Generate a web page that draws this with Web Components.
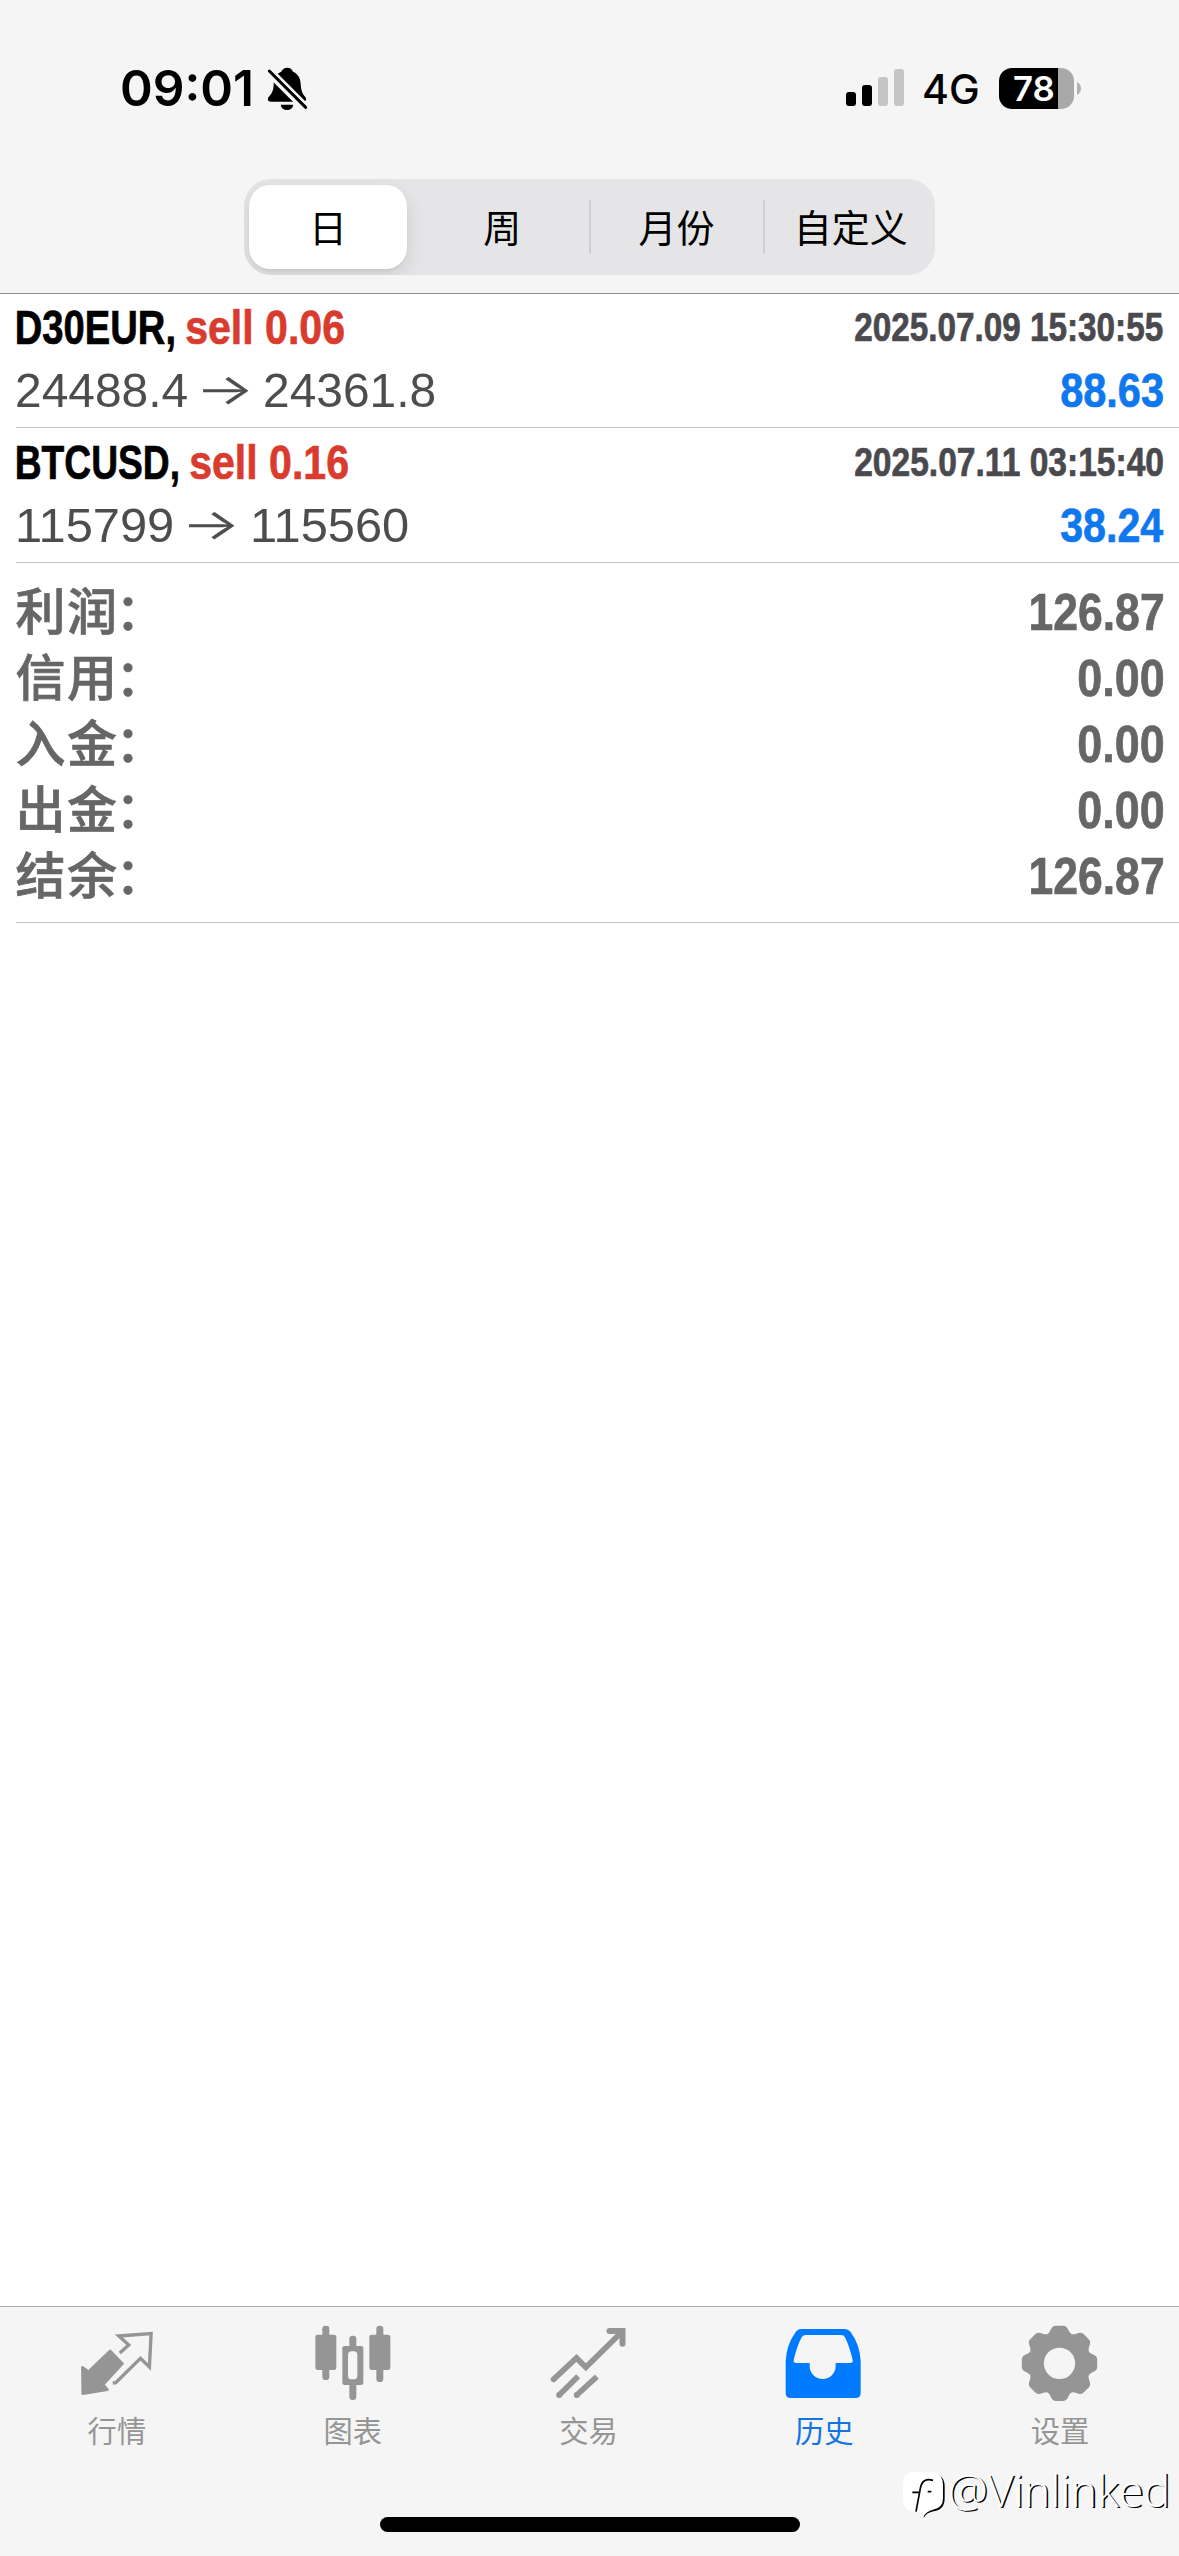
<!DOCTYPE html>
<html lang="zh-CN">
<head>
<meta charset="utf-8">
<title>历史</title>
<style>
html,body{margin:0;padding:0;background:#fff}
body{width:1179px;height:2556px;overflow:hidden;font-family:"Liberation Sans","Noto Sans CJK SC",sans-serif}
</style>
</head>
<body>
<history-app></history-app>
<script>
const define = (name, html, setup) => {
  const tpl = document.createElement('template');
  tpl.innerHTML = html;
  customElements.define(name, class extends HTMLElement {
    connectedCallback() {
      if (this.shadowRoot) return;
      this.attachShadow({mode: 'open'}).append(tpl.content.cloneNode(true));
      if (setup) setup(this, this.shadowRoot);
    }
  });
};

/* Text condensed or widened so that its ink spans exactly `w` pixels. */
const pen = document.createElement('canvas').getContext('2d');
define('fit-text', `<style>
  :host{display:inline-block;white-space:nowrap;flex:none}
  span{display:inline-block;transform-origin:0 50%}
</style><span><slot></slot></span>`, (el, root) => {
  const cs = getComputedStyle(el);
  pen.font = `${cs.fontWeight} ${cs.fontSize} ${cs.fontFamily}`;
  const m = pen.measureText(el.textContent);
  const w = +el.getAttribute('w');
  const k = w / (m.actualBoundingBoxRight + m.actualBoundingBoxLeft);
  el.style.width = w + 'px';
  root.querySelector('span').style.transform = `translateX(${m.actualBoundingBoxLeft * k}px) scaleX(${k})`;
});

define('status-bar', `<style>
  :host{display:flex;height:179px;box-sizing:border-box;padding:56px 98px 0 122px;align-items:flex-start;font-family:Inter,sans-serif;color:#000}
  .row{display:flex;height:64px;align-items:center;width:100%}
  .time{font-size:50px;font-weight:600;line-height:64px}
  .bell{margin:1px 0 0 15px}
  .sig{margin-left:auto;margin-right:20px}
  .net{font-size:41px;font-weight:500;line-height:64px;margin:2px 21px 0 0}
  .batt{display:flex;align-items:center;gap:3px}
  .cell{width:75px;height:41px;border-radius:13px;background:linear-gradient(90deg,#000 59px,#a8a8a8 59px);color:#fff;font-size:34px;font-weight:600;line-height:42px;box-sizing:border-box;padding-left:15px}
  svg{display:block;flex:none}
</style>
<div class="row">
  <fit-text class="time" w="129">09:01</fit-text>
  <svg class="bell" width="44" height="46" viewBox="498 46 132 138">
    <path d="M562 51C552 51 546 56 544 63C527 70 521 83 521 99C521 122 514 129 506 139C501 147 504 153 513 153H609C618 153 621 146 616 139C607 129 603 119 602 99C601 82 594 69 579 63C577 56 571 51 562 51Z"/>
    <path d="M542 162H580C578 173 571 178 561 178S544 173 542 162Z"/>
    <path d="M500 55L624 179" stroke="#f5f5f5" stroke-width="27"/>
    <path d="M508 61L617 170" stroke="#000" stroke-width="9" stroke-linecap="round"/>
  </svg>
  <svg class="sig" width="58" height="38" viewBox="0 0 58 38">
    <rect x="0" y="23" width="10" height="14" rx="3"/><rect x="16" y="16" width="10" height="21" rx="3"/>
    <rect x="32" y="8" width="10" height="29" rx="3" fill="#c5c5c5"/><rect x="48" y="0" width="10" height="37" rx="3" fill="#c5c5c5"/>
  </svg>
  <fit-text class="net" w="54">4G</fit-text>
  <div class="batt"><div class="cell"><fit-text w="40">78</fit-text></div>
  <svg width="4" height="13" viewBox="0 0 4 13"><path d="M0 0Q4 2.5 4 6.5T0 13Z" fill="#b0b0b0"/></svg></div>
</div>`);

define('segment-item', `<style>
  :host{display:flex;flex:1;align-items:center;justify-content:center;height:84px;box-sizing:border-box;padding-bottom:3px;border-radius:21px;font:38px/81px "Noto Sans CJK SC",sans-serif;color:#000}
  :host([selected]){background:#fff;box-shadow:0 7px 20px rgba(0,0,0,.1),0 2px 3px rgba(0,0,0,.05)}
</style><slot></slot>`);

define('segmented-control', `<style>
  :host{display:flex;align-items:center;width:691px;height:96px;box-sizing:border-box;padding:0 5px;background:#e5e5e7;border-radius:27px;margin:0 auto;overflow:hidden}
  i{width:2px;height:54px;background:#cfcfd2;margin:0 7px}
  i.off{background:none}
</style>
<segment-item selected>日</segment-item><i class="off"></i><segment-item>周</segment-item><i></i><segment-item>月份</segment-item><i></i><segment-item>自定义</segment-item>`);

define('deal-row', `<style>
  :host{display:block;height:135px;box-sizing:border-box;margin-left:16px;padding:1px 16px 0 1px;border-bottom:1px solid #c3c3c5}
  :host([first]){height:134px}
  :host([first]) .top{margin-top:-1px}
  .row{display:flex;align-items:baseline}
  .top{height:67px;line-height:67px;font-size:49px;font-weight:700;-webkit-text-stroke:.7px currentColor}
  .bot{height:59px;line-height:59px;font-size:49px}
  .side{color:#d93c2e;margin-left:12px}
  .date{margin-left:auto;font-size:40px;color:#4a4a4e;transform:translateY(-3.5px)}
  .price{color:#4d4d50}
  .arrow{font-family:Inter,sans-serif;font-size:42px;font-weight:300;font-feature-settings:"case";color:#4d4d50;margin:0 17px 0 16px;line-height:50px;transform:translateY(-1px);-webkit-text-stroke:.5px #4d4d50}
  :host(:not([first])) .arrow{margin:0 19px 0 17px}
  :host(:not([first])) .bot{padding-left:1px}
  .val{margin-left:auto;font-weight:700;color:#0f78ee;-webkit-text-stroke:.7px #0f78ee}
</style><div class="row top"></div><div class="row bot"></div>`, (el, root) => {
  const [sym, side, date, a, b, val] = el.dataset.v.split('|').map(s => s.split('='));
  const t = (cls, [txt, w]) => `<fit-text class="${cls}" w="${w}">${txt}</fit-text>`;
  root.querySelector('.top').innerHTML = t('sym', sym) + t('side', side) + t('date', date);
  root.querySelector('.bot').innerHTML = t('price', a) + t('arrow', ['→', 45]) + t('price', b) + t('val', val);
});

define('sum-row', `<style>
  :host{display:flex;align-items:baseline;justify-content:space-between;height:66px;color:#666;font-size:52px;font-weight:700;line-height:66px;-webkit-text-stroke:.7px #666}
  .l{font:500 50px/66px "Liberation Sans","Noto Sans CJK SC",sans-serif;letter-spacing:1.5px;margin-left:-.5px}
  i{font-style:normal;margin-left:-3px}
</style><span class="l"><slot></slot><i>：</i></span><fit-text></fit-text>`, (el, root) => {
  const v = el.getAttribute('value');
  const f = document.createElement('fit-text');
  f.textContent = v;
  f.setAttribute('w', v.length > 4 ? 132 : 84);
  root.querySelector('fit-text').replaceWith(f);
});

define('tab-item', `<style>
  :host{display:flex;flex:1;flex-direction:column;align-items:center;color:#959595}
  :host([active]){color:#007aff}
  .t{font:29.3px/44px "Noto Sans CJK SC",sans-serif;margin:4px 2px 0 0}
  :host([active]) .t{color:#1173e4}
</style><slot name="icon"></slot><span class="t"><slot></slot></span>`);

define('tab-bar', `<style>
  :host{display:flex;height:250px;box-sizing:border-box;border-top:1px solid #adadad;background:#f5f5f5;padding-top:13px}
  svg{display:block;width:80px;height:83.33px;fill:currentColor}
</style>
<tab-item><svg slot="icon" viewBox="83.7 90 240 250">
  <path d="M97 232L115 245L180 183L217 221L159 284L172 299L98 311Z" stroke="currentColor" stroke-width="8" stroke-linejoin="round"/>
  <path d="M209 189L236 165L206 138L303 131L298 231L271 205L197 278L188 279" fill="none" stroke="currentColor" stroke-width="10"/>
</svg>行情</tab-item>
<tab-item><svg slot="icon" viewBox="791 90 240 250">
  <rect x="816" y="107" width="21" height="163" rx="10"/><rect x="795" y="134" width="63" height="106" rx="7"/>
  <rect x="978" y="107" width="21" height="169" rx="10"/><rect x="957" y="134" width="63" height="106" rx="7"/>
  <rect x="897" y="137" width="21" height="193" rx="10"/><rect x="876" y="168" width="63" height="117" rx="7"/>
  <rect x="893" y="184" width="28" height="84" rx="11" fill="#f5f5f5"/>
</svg>图表</tab-item>
<tab-item><svg slot="icon" viewBox="88.5 90 240 250"><g fill="none" stroke="currentColor" stroke-width="17">
  <path d="M102 268L171 204L199 232L306 127" stroke-linecap="round"/><path d="M270 123H309V161" stroke-width="18" stroke-linecap="round"/>
  <path d="M119 315L176 259M172 315L232 260"/></g><circle cx="119" cy="315" r="9"/><circle cx="172" cy="315" r="9"/>
</svg>交易</tab-item>
<tab-item active><svg slot="icon" viewBox="796 90 240 250">
  <path fill-rule="evenodd" d="M845 117H975Q986 117 993 126Q1021 165 1023 213V309Q1023 324 1008 324H813Q798 324 798 309V213Q800 165 828 126Q834 117 845 117ZM858 135Q850 135 846 142Q832 168 822 210Q821 219 830 219H870V228A39 39 0 0 0 948 228V219H991Q1001 219 999 210Q989 168 976 142Q973 135 964 135Z"/>
</svg>历史</tab-item>
<tab-item><svg slot="icon" class="gear" viewBox="423 90 240 250"></svg>设置</tab-item>`, (el, root) => {
  const tooth = [0,45,90,135,180,225,270,315].map(a => `<path transform="rotate(${a})" d="M-40 -84Q-31 -90 -27 -99Q-22 -113 -12 -113H12Q22 -113 27 -99Q31 -90 40 -84Z"/>`).join('');
  root.querySelector('.gear').innerHTML = `<g transform="translate(538.5 220)">${tooth}<circle r="91"/><circle r="47" fill="#f5f5f5"/></g>`;
});

define('water-mark', `<style>
  :host{position:absolute;left:903px;top:2458px;display:flex;align-items:flex-start;gap:5px;color:#fff}
  svg{display:block;margin-top:12px}
  fit-text{font:300 44px/64px "Open Sans",sans-serif;text-shadow:1.5px 1px 0 #000}
</style>
<svg width="42" height="50" viewBox="68 540 126 150">
  <path d="M100 550H160Q193 555 193 590V625Q193 660 160 664Q138 668 130 684L134 655Z" fill="#000"/>
  <path d="M98 545H158Q188 550 188 585V625Q188 655 158 659Q138 664 130 678L126 665H98Q68 660 68 630V580Q68 550 98 545Z" fill="#fff"/>
  <path d="M158 571Q128 562 121 590L107 665M96 607H120M142 605H153" fill="none" stroke="#000" stroke-width="5"/>
</svg>
<fit-text w="217">@Vinlinked</fit-text>`);

define('history-app', `<style>
  :host{display:flex;flex-direction:column;width:1179px;height:2556px;position:relative;background:#fff}
  header{height:294px;box-sizing:border-box;background:#f5f5f5;border-bottom:1px solid #8c8c90}
  main{flex:1}
  .sum{margin-left:16px;padding:16px 16px 13px 0;border-bottom:1px solid #c3c3c5}
  .home{position:absolute;left:380px;top:2517px;width:420px;height:15px;border-radius:8px;background:#000}
</style>
<header><status-bar></status-bar><segmented-control></segmented-control></header>
<main>
  <deal-row first data-v="D30EUR,=157|sell 0.06=158|2025.07.09 15:30:55=308|24488.4=170|24361.8=170|88.63=102"></deal-row>
  <deal-row data-v="BTCUSD,=161|sell 0.16=158|2025.07.11 03:15:40=308|115799=154|115560=155|38.24=102"></deal-row>
  <div class="sum">
    <sum-row value="126.87">利润</sum-row><sum-row value="0.00">信用</sum-row><sum-row value="0.00">入金</sum-row><sum-row value="0.00">出金</sum-row><sum-row value="126.87">结余</sum-row>
  </div>
</main>
<tab-bar></tab-bar>
<div class="home"></div>
<water-mark></water-mark>`);
</script>
</body>
</html>
